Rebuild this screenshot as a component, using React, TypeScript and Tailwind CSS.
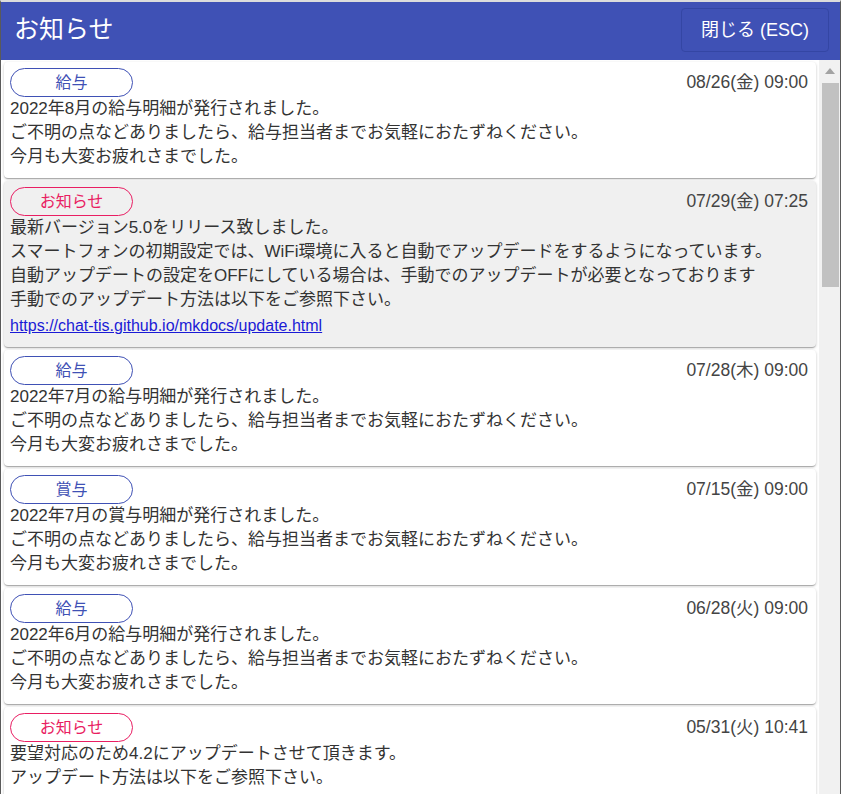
import React from 'react';

type Notice = {
    tag: '給与' | '賞与' | 'お知らせ';
    date: string;
    lines: string[];
    link?: string;
    active?: boolean;
};

const NOTICES: Notice[] = [
    {
        tag: '給与',
        date: '08/26(金) 09:00',
        lines: [
            '2022年8月の給与明細が発行されました。',
            'ご不明の点などありましたら、給与担当者までお気軽におたずねください。',
            '今月も大変お疲れさまでした。',
        ],
    },
    {
        tag: 'お知らせ',
        date: '07/29(金) 07:25',
        active: true,
        lines: [
            '最新バージョン5.0をリリース致しました。',
            'スマートフォンの初期設定では、WiFi環境に入ると自動でアップデードをするようになっています。',
            '自動アップデートの設定をOFFにしている場合は、手動でのアップデートが必要となっております',
            '手動でのアップデート方法は以下をご参照下さい。',
        ],
        link: 'https://chat-tis.github.io/mkdocs/update.html',
    },
    {
        tag: '給与',
        date: '07/28(木) 09:00',
        lines: [
            '2022年7月の給与明細が発行されました。',
            'ご不明の点などありましたら、給与担当者までお気軽におたずねください。',
            '今月も大変お疲れさまでした。',
        ],
    },
    {
        tag: '賞与',
        date: '07/15(金) 09:00',
        lines: [
            '2022年7月の賞与明細が発行されました。',
            'ご不明の点などありましたら、給与担当者までお気軽におたずねください。',
            '今月も大変お疲れさまでした。',
        ],
    },
    {
        tag: '給与',
        date: '06/28(火) 09:00',
        lines: [
            '2022年6月の給与明細が発行されました。',
            'ご不明の点などありましたら、給与担当者までお気軽におたずねください。',
            '今月も大変お疲れさまでした。',
        ],
    },
    {
        tag: 'お知らせ',
        date: '05/31(火) 10:41',
        lines: [
            '要望対応のため4.2にアップデートさせて頂きます。',
            'アップデート方法は以下をご参照下さい。',
        ],
    },
];

const NoticeCard: React.FC<{ notice: Notice }> = ({ notice }) => {
    const isInfo = notice.tag === 'お知らせ';
    return (
        <div
            className={`shrink-0 rounded-[4px] pt-[6px] pb-[9px] pl-[6px] pr-[8px] shadow-[0_1px_3px_rgba(0,0,0,0.2),0_1px_1px_rgba(0,0,0,0.14),0_2px_1px_-1px_rgba(0,0,0,0.12)]
                ${notice.active ? 'bg-[#f0f0f0]' : 'bg-white'}`}
        >
            <div className="flex items-center justify-between">
                <span
                    className={`w-[123px] h-[29px] rounded-full border flex items-center justify-center text-[16px] leading-none
                        ${isInfo ? 'border-[#e91e63] text-[#e91e63]' : 'border-[#3f51b5] text-[#3f51b5]'}`}
                >
                    {notice.tag}
                </span>
                <span className="text-[17.5px] text-[#444]">{notice.date}</span>
            </div>
            <div className="text-[17px] leading-[24px] text-[#333] whitespace-nowrap">
                {notice.lines.map((l, i) => (
                    <p key={i}>{l}</p>
                ))}
                {notice.link && (
                    <a href={notice.link} className="block pt-[2px] text-[16px] text-[#1a1ad6] underline">
                        {notice.link}
                    </a>
                )}
            </div>
        </div>
    );
};

export default function App() {
    return (
        <div
            className="w-[841px] h-[794px] flex flex-col overflow-hidden bg-white border-t-2 border-t-[#dcdcdc] border-x border-x-[#5a5a5a]"
            style={{ fontFamily: '"Liberation Sans", "Noto Sans CJK JP", sans-serif' }}
        >
            {/* Header */}
            <header className="h-[58px] shrink-0 bg-[#3f51b5] flex items-center justify-between pl-[13px] pr-[11px]">
                <h1 className="text-[25px] text-white font-normal leading-none -mt-[4px]">お知らせ</h1>
                <button className="w-[148px] h-[44px] rounded-[4px] border border-[#3446a4] text-white text-[18px] flex items-center justify-center mb-[2px]">
                    閉じる (ESC)
                </button>
            </header>

            {/* Body */}
            <div className="flex-1 flex min-h-0">
                <div className="flex-1 flex flex-col gap-[3px] pt-[2px] px-[3px] overflow-hidden">
                    {NOTICES.map((n, i) => (
                        <NoticeCard key={i} notice={n} />
                    ))}
                </div>

                {/* Scrollbar */}
                <div className="w-[21px] shrink-0 bg-[#f1f1f1] flex flex-col items-center">
                    <div className="h-[21px] w-full flex items-center justify-center pl-[1px]">
                        <svg width="10" height="6" viewBox="0 0 10 6">
                            <path d="M0 6 L5 0 L10 6 Z" fill="#a3a3a3" />
                        </svg>
                    </div>
                    <div className="mt-[2px] h-[204px] w-[17px] ml-[2px] bg-[#c1c1c1]" />
                </div>
            </div>
        </div>
    );
}
